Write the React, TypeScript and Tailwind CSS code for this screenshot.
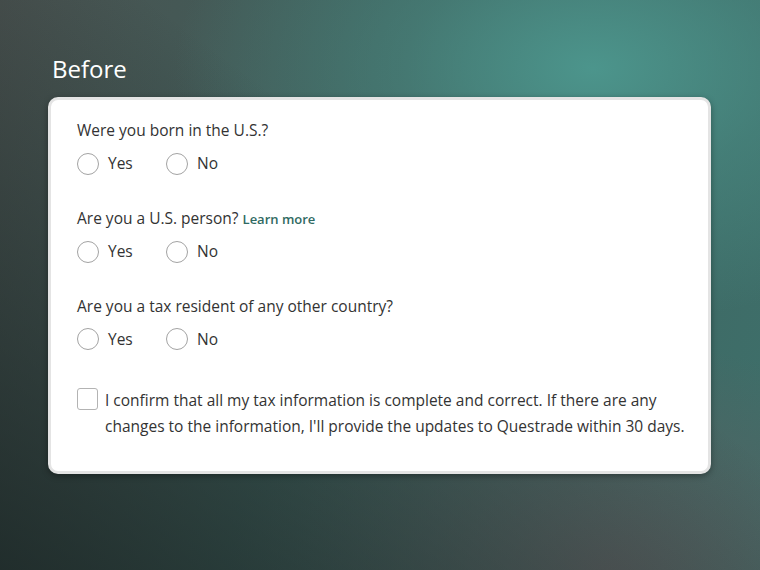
import React from "react";

const font = { fontFamily: '"Open Sans", "Noto Sans", sans-serif' };

function Radio({ label }: { label: string }) {
  return (
    <label className="flex items-center gap-[9px] w-[89px]">
      <span className="w-[22px] h-[22px] rounded-full border-[1.5px] border-[#a3a3a3] bg-white shrink-0" />
      <span className="text-[15.5px] text-[#333]">{label}</span>
    </label>
  );
}

function Question({ children }: { children: React.ReactNode }) {
  return (
    <div>
      <p className="text-[15.5px] leading-[20px] h-[20px] text-[#333]">{children}</p>
      <div className="flex mt-[12px]">
        <Radio label="Yes" />
        <Radio label="No" />
      </div>
    </div>
  );
}

export default function App() {
  return (
    <div
      style={font}
      className="w-[760px] h-[570px] overflow-hidden bg-[radial-gradient(ellipse_55%_45%_at_78%_12%,#4c958c_0%,rgba(76,149,140,0.45)_45%,transparent_100%),radial-gradient(ellipse_50%_40%_at_80%_100%,#595e5f_0%,transparent_100%),linear-gradient(100deg,#4a5250_0%,#3f5f5b_45%,#3e6f6a_100%)]"
    >
      <div className="w-full h-full bg-[linear-gradient(to_bottom_left,transparent_40%,rgba(20,32,31,0.75)_100%)] pt-[53px]">
        <h1 className="ml-[52px] text-[24px] leading-[32px] text-white">Before</h1>
        <div className="ml-[48px] mt-[12px] w-[663px] h-[377px] bg-white border-[3px] border-[#e4e4e4] rounded-[10px] shadow-[0_2px_6px_rgba(0,0,0,0.35)] pl-[26px] pt-[20px]">
          <Question>Were you born in the U.S.?</Question>
          <div className="mt-[33px]">
            <Question>
              Are you a U.S. person?{" "}
              <a className="text-[13px] leading-none font-semibold text-[#2f6a62]">Learn more</a>
            </Question>
          </div>
          <div className="mt-[32px]">
            <Question>Are you a tax resident of any other country?</Question>
          </div>
          <div className="mt-[36px] flex items-start gap-[7px]">
            <span className="w-[21px] h-[22px] rounded-[3px] border-[1.5px] border-[#b3b3b3] shrink-0 mt-[1px]" />
            <p className="w-[582px] text-[15.5px] leading-[26px] text-[#333]">
              I confirm that all my tax information is complete and correct. If there are any changes to the information, I'll provide the updates to Questrade within 30 days.
            </p>
          </div>
        </div>
      </div>
    </div>
  );
}
